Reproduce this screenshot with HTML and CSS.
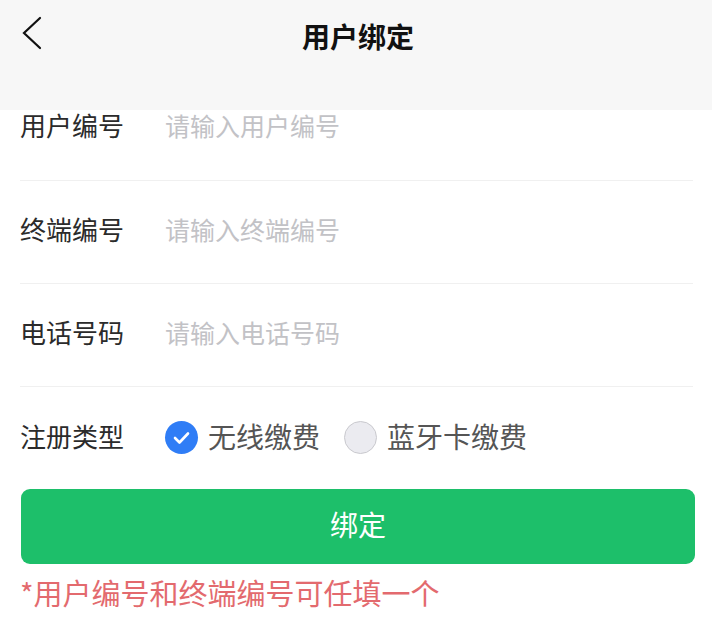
FILE: index.html
```html
<!DOCTYPE html>
<html lang="zh-CN">
<head>
<meta charset="utf-8">
<title>用户绑定</title>
<link rel="stylesheet" href="styles.css">
</head>
<body>
<header class="nav">
  <div class="nav-left">
    <svg class="back" width="24" height="38" viewBox="0 0 24 38"><polyline points="20,4 4,19 20,34" fill="none" stroke="#111" stroke-width="2.2" stroke-linecap="round" stroke-linejoin="miter"/></svg>
  </div>
  <h1 class="title">用户绑定</h1>
  <div class="nav-right"></div>
</header>
<main class="form">
  <div class="row row-first">
    <span class="label">用户编号</span>
    <span class="placeholder">请输入用户编号</span>
  </div>
  <div class="row">
    <span class="label">终端编号</span>
    <span class="placeholder">请输入终端编号</span>
  </div>
  <div class="row">
    <span class="label">电话号码</span>
    <span class="placeholder">请输入电话号码</span>
  </div>
  <div class="row row-last">
    <span class="label">注册类型</span>
    <div class="radios">
      <div class="radio">
        <span class="dot dot-on"><svg width="33" height="33" viewBox="0 0 33 33"><polyline points="10,17 14.5,21.5 23,12.5" fill="none" stroke="#fff" stroke-width="2.6" stroke-linecap="round" stroke-linejoin="round"/></svg></span>
        <span class="radio-text">无线缴费</span>
      </div>
      <div class="radio">
        <span class="dot dot-off"></span>
        <span class="radio-text">蓝牙卡缴费</span>
      </div>
    </div>
  </div>
  <button class="btn">绑定</button>
  <p class="tip">*用户编号和终端编号可任填一个</p>
</main>
</body>
</html>
```
FILE: styles.css
```css
* { box-sizing: border-box; }
html, body { margin: 0; padding: 0; background: #fff; }
body {
  width: 712px;
  font-family: "Noto Sans CJK SC", "Noto Sans", sans-serif;
  color: #333;
}
.nav {
  height: 110px;
  background: #f7f7f7;
  display: grid;
  grid-template-columns: 1fr auto 1fr;
  align-items: start;
  padding: 0 16px 0 20px;
}
.nav-left { padding-top: 14px; }
.back { display: block; }
.title {
  margin: 0;
  padding-top: 16px;
  font-size: 28px;
  line-height: 40px;
  font-weight: 700;
  color: #111;
}
.form { padding: 0 19px 0 20px; }
.row {
  height: 103px;
  border-bottom: 1px solid #f0f0f0;
  display: flex;
  align-items: center;
  padding-bottom: 6px;
}
.row-first {
  height: 71px;
  align-items: flex-start;
  padding-bottom: 0;
}
.row-first .label,
.row-first .placeholder { line-height: 30px; }
.row-last { border-bottom: none; height: 102px; padding-bottom: 4px; }
.label {
  width: 145px;
  flex: none;
  font-size: 26px;
  line-height: 36px;
  color: #2b2b2b;
}
.placeholder {
  font-size: 25px;
  line-height: 36px;
  color: #c2c2c6;
}
.radios { display: flex; align-items: center; gap: 24px; }
.radio { display: flex; align-items: center; gap: 10px; }
.dot {
  width: 33px;
  height: 33px;
  border-radius: 50%;
  display: block;
  flex: none;
  margin-top: 2px;
}
.dot svg { display: block; }
.dot-on { background: #2f7df6; }
.dot-off { background: #ebebf0; border: 1px solid #c9c9ce; }
.radio-text {
  font-size: 28px;
  line-height: 40px;
  color: #555;
}
.btn {
  display: block;
  width: 674px;
  height: 75px;
  margin: 0 0 0 1px;
  border: none;
  border-radius: 9px;
  background: #1dbf6a;
  color: #fff;
  font-family: inherit;
  font-size: 28px;
  line-height: 40px;
  padding: 0 0 6px 0;
}
.tip {
  margin: 8px 0 0 0;
  font-size: 29px;
  line-height: 40px;
  color: #e36a6e;
}
```
